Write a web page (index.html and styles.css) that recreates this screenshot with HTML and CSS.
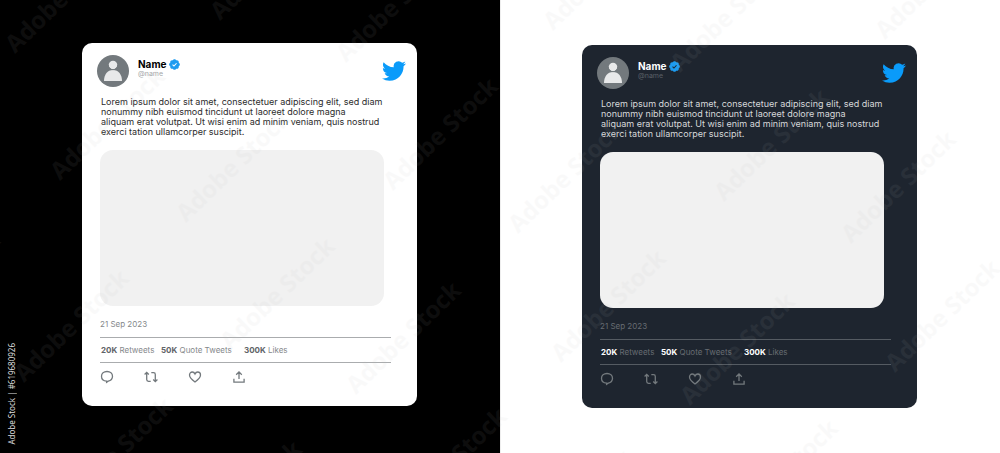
FILE: index.html
```html
<!DOCTYPE html>
<html lang="en">
<head>
    <meta charset="UTF-8">
    <meta name="viewport" content="width=device-width, initial-scale=1.0">
    <title>Tweet Cards</title>
    <link rel="stylesheet" href="styles.css">
</head>
<body>
    <!-- Shared icons -->
    <svg class="sprite" width="0" height="0" aria-hidden="true">
        <symbol id="user" viewBox="0 0 32 32">
            <circle cx="16" cy="16" r="16" fill="#73797d"/>
            <circle cx="16" cy="10" r="4.3" fill="#e8e9ea"/>
            <path d="M7 26c0-6.500 3.500-11 9-11s9 4.500 9 11z" fill="#e8e9ea"/>
            <path d="M11.300 10a4.700 4.700 0 0 0 9.400 0" fill="none" stroke="#73797d" stroke-width=".9"/>
        </symbol>
        <symbol id="verified" viewBox="1.500 1.500 21 21">
            <path fill="#1d9bf0" d="M22.250 12c0-1.430-.88-2.670-2.190-3.340.46-1.390.2-2.900-.81-3.910s-2.520-1.270-3.910-.81c-.66-1.310-1.910-2.190-3.340-2.190s-2.670.88-3.330 2.190c-1.400-.46-2.910-.2-3.920.81s-1.260 2.520-.8 3.910c-1.310.67-2.200 1.910-2.200 3.340s.89 2.670 2.200 3.340c-.46 1.390-.21 2.900.8 3.910s2.520 1.260 3.910.81c.67 1.310 1.910 2.190 3.340 2.190s2.680-.88 3.340-2.190c1.390.45 2.900.2 3.910-.81s1.270-2.520.81-3.910c1.310-.67 2.190-1.910 2.190-3.340z"/>
            <path d="M8.300 12.300l2.700 2.600 4.900-5.300" fill="none" stroke="currentColor" stroke-width="2"/>
        </symbol>
        <symbol id="bird" viewBox="0 2 24 20">
            <path fill="#0a9bfa" d="M23.953 4.570a10 10 0 01-2.825.775 4.958 4.958 0 002.163-2.723c-.951.555-2.005.959-3.127 1.184a4.920 4.920 0 00-8.384 4.482C7.690 8.095 4.067 6.130 1.640 3.162a4.822 4.822 0 00-.666 2.475c0 1.710.87 3.213 2.188 4.096a4.904 4.904 0 01-2.228-.616v.06a4.923 4.923 0 003.946 4.827 4.996 4.996 0 01-2.212.085 4.936 4.936 0 004.604 3.417 9.867 9.867 0 01-6.102 2.105c-.39 0-.779-.023-1.170-.067a13.995 13.995 0 007.557 2.209c9.053 0 13.998-7.496 13.998-13.985 0-.21 0-.42-.015-.63A9.935 9.935 0 0024 4.590z"/>
        </symbol>
        <symbol id="reply" viewBox="0 0 14 14">
            <path d="M7 1.500c3.200 0 5.500 2 5.500 4.800 0 2.500-2 4.400-4.300 4.900L6.600 12.300v-1.100C3.500 11 1.500 9 1.500 6.300 1.500 3.500 3.800 1.500 7 1.500z"/>
        </symbol>
        <symbol id="retweet" viewBox="0 0 14 14">
            <path d="M.6 4.500L2.700 2.400l2.100 2.100M2.700 2.700V9.500q0 1.800 1.800 1.800h2.200M7.300 2.700h2.200q1.800 0 1.800 1.800v6.800M9.200 9.500l2.100 2.100 2.100-2.100"/>
        </symbol>
        <symbol id="like" viewBox="0 0 14 14">
            <path d="M7 12C3.800 9.800 1.500 7.600 1.500 5.100c0-1.800 1.200-3.100 2.800-3.100C5.500 2 6.500 2.700 7 3.900 7.500 2.700 8.500 2 9.700 2c1.600 0 2.800 1.300 2.800 3.100C12.500 7.600 10.200 9.800 7 12z"/>
        </symbol>
        <symbol id="share" viewBox="0 0 14 14">
            <path d="M7 9V2M4.200 4.700L7 1.900l2.800 2.800M1.900 8.700v3.400h10.200V8.700"/>
        </symbol>
    </svg>

    <main class="page">
        <section class="panel panel-black">
            <article class="card card-light">
                <header class="card-header">
                    <svg class="avatar"><use href="#user"/></svg>
                    <div class="author">
                        <h2 class="name">Name <svg class="badge"><use href="#verified"/></svg></h2>
                        <p class="handle">@name</p>
                    </div>
                    <svg class="logo"><use href="#bird"/></svg>
                </header>
                <div class="card-body">
                    <p class="text">Lorem ipsum dolor sit amet, consectetuer adipiscing elit, sed diam<br>
                        nonummy nibh euismod tincidunt ut laoreet dolore magna<br>
                        aliquam erat volutpat. Ut wisi enim ad minim veniam, quis nostrud<br>
                        exerci tation ullamcorper suscipit.</p>
                    <div class="media"></div>
                    <time class="date" datetime="2023-09-21">21 Sep 2023</time>
                    <div class="stats">
                        <a href="#"><b>20K</b> Retweets</a>
                        <a href="#"><b>50K</b> Quote Tweets</a>
                        <a href="#"><b>300K</b> Likes</a>
                    </div>
                    <div class="actions">
                        <button aria-label="Reply"><svg><use href="#reply"/></svg></button>
                        <button aria-label="Retweet"><svg><use href="#retweet"/></svg></button>
                        <button aria-label="Like"><svg><use href="#like"/></svg></button>
                        <button aria-label="Share"><svg><use href="#share"/></svg></button>
                    </div>
                </div>
            </article>
        </section>

        <section class="panel panel-white">
            <article class="card card-dark">
                <header class="card-header">
                    <svg class="avatar"><use href="#user"/></svg>
                    <div class="author">
                        <h2 class="name">Name <svg class="badge"><use href="#verified"/></svg></h2>
                        <p class="handle">@name</p>
                    </div>
                    <svg class="logo"><use href="#bird"/></svg>
                </header>
                <div class="card-body">
                    <p class="text">Lorem ipsum dolor sit amet, consectetuer adipiscing elit, sed diam<br>
                        nonummy nibh euismod tincidunt ut laoreet dolore magna<br>
                        aliquam erat volutpat. Ut wisi enim ad minim veniam, quis nostrud<br>
                        exerci tation ullamcorper suscipit.</p>
                    <div class="media"></div>
                    <time class="date" datetime="2023-09-21">21 Sep 2023</time>
                    <div class="stats">
                        <a href="#"><b>20K</b> Retweets</a>
                        <a href="#"><b>50K</b> Quote Tweets</a>
                        <a href="#"><b>300K</b> Likes</a>
                    </div>
                    <div class="actions">
                        <button aria-label="Reply"><svg><use href="#reply"/></svg></button>
                        <button aria-label="Retweet"><svg><use href="#retweet"/></svg></button>
                        <button aria-label="Like"><svg><use href="#like"/></svg></button>
                        <button aria-label="Share"><svg><use href="#share"/></svg></button>
                    </div>
                </div>
            </article>
        </section>
    </main>

    <!-- Watermark -->
    <svg class="watermark" aria-hidden="true">
        <text transform="translate(15 54) rotate(-44)">Adobe Stock</text>
        <text transform="translate(220 21) rotate(-44)">Adobe Stock</text>
        <text transform="translate(346 63) rotate(-44)">Adobe Stock</text>
        <text transform="translate(60 181) rotate(-44)">Adobe Stock</text>
        <text transform="translate(186 223) rotate(-44)">Adobe Stock</text>
        <text transform="translate(393 191) rotate(-44)">Adobe Stock</text>
        <text transform="translate(-105 345) rotate(-44)">Adobe Stock</text>
        <text transform="translate(24 383) rotate(-44)">Adobe Stock</text>
        <text transform="translate(230 351) rotate(-44)">Adobe Stock</text>
        <text transform="translate(356 395) rotate(-44)">Adobe Stock</text>
        <text transform="translate(68 511) rotate(-44)">Adobe Stock</text>
        <text transform="translate(197 554) rotate(-44)">Adobe Stock</text>
        <text transform="translate(402 521) rotate(-44)">Adobe Stock</text>
        <text transform="translate(553 31) rotate(-44)">Adobe Stock</text>
        <text transform="translate(680 73) rotate(-44)">Adobe Stock</text>
        <text transform="translate(885 40) rotate(-44)">Adobe Stock</text>
        <text transform="translate(518 234) rotate(-44)">Adobe Stock</text>
        <text transform="translate(724 202) rotate(-44)">Adobe Stock</text>
        <text transform="translate(851 244) rotate(-44)">Adobe Stock</text>
        <text transform="translate(561 363) rotate(-44)">Adobe Stock</text>
        <text transform="translate(690 406) rotate(-44)">Adobe Stock</text>
        <text transform="translate(895 373) rotate(-44)">Adobe Stock</text>
        <text transform="translate(733 533) rotate(-44)">Adobe Stock</text>
        <text transform="translate(527 563) rotate(-44)">Adobe Stock</text>
    </svg>
    <p class="credit">Adobe Stock | #619680926</p>
</body>
</html>
```
FILE: styles.css
```css
* {
    box-sizing: border-box;
}
body {
    margin: 0;
    font-family: "Inter", "Open Sans", sans-serif;
    font-size: 9px;
    position: relative;
    overflow: hidden;
}
h2, p {
    margin: 0;
}
.sprite {
    position: absolute;
}
.page {
    display: grid;
    grid-template-columns: 1fr 1fr;
    min-height: 100vh;
}
.panel {
    display: flex;
    justify-content: center;
    align-items: flex-start;
    padding-right: 1px;
    padding-bottom: 44px;
}
.panel-black {
    background-color: #000;
    padding-top: 43px;
}
.panel-white {
    background-color: #fff;
    padding-top: 45px;
    box-shadow: inset 1px 0 #eee;
}
.card {
    width: 67%;
    min-width: 335px;
    padding: 12px 11px 22px 15px;
    border-radius: 10px;
}
.card-light {
    --bg: #fff;
    --title: #000;
    --text: #2c2c2c;
    --strong: #5f6468;
    --muted: #85888b;
    --handle: #a5a7a9;
    --line: #aaacae;
    --icon: #73797d;
}
.card-dark {
    --bg: #1e252f;
    --title: #fff;
    --text: #d6d8da;
    --strong: #fff;
    --muted: #676c72;
    --handle: #5b6067;
    --line: #555b62;
    --icon: #73797d;
}
.card {
    background-color: var(--bg);
    color: var(--text);
}
.card-header {
    display: flex;
    align-items: flex-start;
}
.avatar {
    width: 32px;
    height: 32px;
}
.author {
    flex: 1;
    padding: 2px 0 0 9px;
}
.name {
    display: flex;
    align-items: center;
    gap: 2px;
    color: var(--title);
    font-size: 10px;
    font-weight: 700;
    line-height: 14px;
}
.badge {
    width: 11px;
    height: 11px;
    color: var(--bg);
}
.handle {
    color: var(--handle);
    font-size: 7px;
    line-height: 6px;
}
.logo {
    width: 24px;
    height: 20px;
    margin-top: 6px;
}
.card-body {
    padding: 10px 15px 0 3px;
}
.text {
    padding-left: 1px;
    font-size: 9px;
    line-height: 10px;
    white-space: nowrap;
}
.media {
    height: 156px;
    margin: 13px 7px 13px 0;
    border-radius: 13px;
    background-color: #f1f1f1;
}
.date {
    display: block;
    color: var(--muted);
    font-size: 8px;
    line-height: 10px;
}
.stats {
    display: grid;
    grid-template-columns: 60px 83px auto;
    margin-top: 8px;
    padding-left: 1px;
    border-top: 1px solid var(--line);
    border-bottom: 1px solid var(--line);
    font-size: 8px;
    line-height: 24px;
    white-space: nowrap;
}
.stats a {
    color: var(--muted);
    text-decoration: none;
}
.stats b {
    color: var(--strong);
    font-weight: 700;
}
.actions {
    display: flex;
    gap: 30px;
    margin-top: 7px;
}
.actions button {
    display: flex;
    padding: 0;
    border: none;
    background: none;
    color: var(--icon);
    cursor: pointer;
}
.actions svg {
    width: 14px;
    height: 14px;
    fill: none;
    stroke: currentColor;
    stroke-width: 1.3px;
}
.watermark {
    position: absolute;
    top: 0;
    left: 0;
    width: 100%;
    height: 100%;
    pointer-events: none;
    fill: #bbb;
    opacity: 0.07;
    font-family: "Open Sans", sans-serif;
    font-size: 24px;
    font-weight: 700;
}
.credit {
    position: absolute;
    left: 5px;
    bottom: 8px;
    color: #ddd;
    font-family: "Noto Sans", sans-serif;
    font-size: 8px;
    line-height: 14px;
    writing-mode: vertical-rl;
    transform: rotate(180deg);
}
```
